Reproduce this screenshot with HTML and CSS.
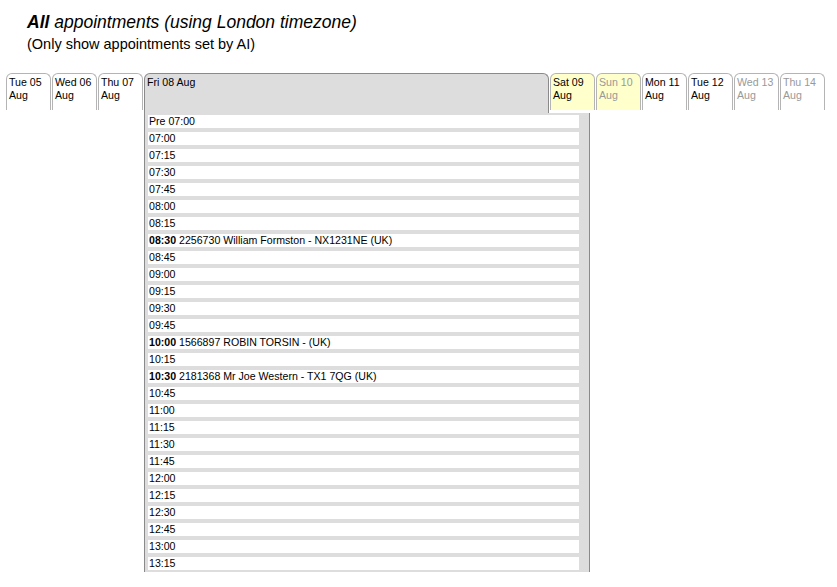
FILE: index.html
```html
<!DOCTYPE html>
<html>
<head>
<meta charset="utf-8">
<link rel="stylesheet" href="styles.css">
</head>
<body>
<div class="header">
  <h1 class="title"><b>All</b> appointments (using London timezone)</h1>
  <div class="subtitle">(Only show appointments set by AI)</div>
</div>
<div class="calendar">
  <div class="tabs">
    <div class="tab">Tue 05<br>Aug</div>
    <div class="tab">Wed 06<br>Aug</div>
    <div class="tab">Thu 07<br>Aug</div>
    <div class="tab selected">Fri 08 Aug</div>
    <div class="tab weekend">Sat 09<br>Aug</div>
    <div class="tab weekend muted">Sun 10<br>Aug</div>
    <div class="tab">Mon 11<br>Aug</div>
    <div class="tab">Tue 12<br>Aug</div>
    <div class="tab muted">Wed 13<br>Aug</div>
    <div class="tab muted">Thu 14<br>Aug</div>
  </div>
  <div class="panel">
    <div class="slot">Pre 07:00</div>
    <div class="slot">07:00</div>
    <div class="slot">07:15</div>
    <div class="slot">07:30</div>
    <div class="slot">07:45</div>
    <div class="slot">08:00</div>
    <div class="slot">08:15</div>
    <div class="slot"><b>08:30</b> 2256730 William Formston - NX1231NE (UK)</div>
    <div class="slot">08:45</div>
    <div class="slot">09:00</div>
    <div class="slot">09:15</div>
    <div class="slot">09:30</div>
    <div class="slot">09:45</div>
    <div class="slot"><b>10:00</b> 1566897 ROBIN TORSIN - (UK)</div>
    <div class="slot">10:15</div>
    <div class="slot"><b>10:30</b> 2181368 Mr Joe Western - TX1 7QG (UK)</div>
    <div class="slot">10:45</div>
    <div class="slot">11:00</div>
    <div class="slot">11:15</div>
    <div class="slot">11:30</div>
    <div class="slot">11:45</div>
    <div class="slot">12:00</div>
    <div class="slot">12:15</div>
    <div class="slot">12:30</div>
    <div class="slot">12:45</div>
    <div class="slot">13:00</div>
    <div class="slot last">13:15</div>
  </div>
</div>
</body>
</html>
```
FILE: styles.css
```css
html, body {
  margin: 0;
  padding: 0;
  background: #fff;
  color: #000;
  font-family: "Liberation Sans", Arial, sans-serif;
}

.header {
  padding: 11px 0 0 27px;
}

.title {
  margin: 0;
  font-size: 17.5px;
  font-weight: normal;
  font-style: italic;
  line-height: 22px;
}

.subtitle {
  font-size: 14.5px;
  line-height: 18px;
  margin-top: 2px;
}

.calendar {
  margin: 20px 0 0 6px;
}

.tabs {
  display: flex;
  align-items: flex-start;
}

.tab {
  box-sizing: border-box;
  width: 45px;
  height: 37px;
  margin-right: 1px;
  padding: 2px 0 0 2px;
  border: 1px solid #b4b4b4;
  border-bottom: none;
  border-radius: 6px 6px 0 0;
  font-size: 10.6px;
  line-height: 13px;
  background: #fff;
}

.tab.selected {
  width: 405px;
  height: 40px;
  background: #ddd;
  border-color: #8a8a8a;
}

.tab.weekend {
  background: #ffffcc;
}

.tab.muted {
  color: #999;
}

.panel {
  box-sizing: border-box;
  width: 446px;
  height: 459px;
  margin-left: 138px;
  padding: 2px 10px 0 3px;
  background: #ddd;
  border-left: 1px solid #8a8a8a;
  border-right: 1px solid #8a8a8a;
  overflow: hidden;
}

.slot {
  height: 13px;
  margin-bottom: 4px;
  padding-left: 1px;
  background: #fff;
  font-size: 10.6px;
  line-height: 13px;
  white-space: nowrap;
}

.slot.last {
  margin-bottom: 0;
}
```
